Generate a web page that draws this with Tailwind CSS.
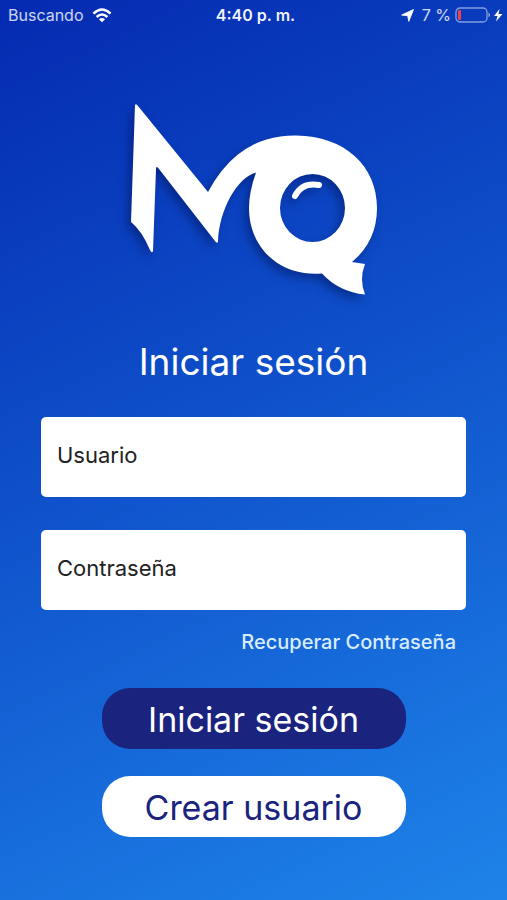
<!DOCTYPE html>
<html lang="es">
<head>
<meta charset="utf-8">
<meta name="viewport" content="width=device-width, initial-scale=1">
<title>Iniciar sesión</title>
<script src="https://cdn.jsdelivr.net/npm/@tailwindcss/browser@4"></script>
</head>
<body class="min-h-screen bg-linear-[155deg] from-[#042ab1] via-[#0f50ca] via-45% to-[#1e84e9] font-['Inter',sans-serif] text-white">
  <header class="grid h-[30px] grid-cols-[1fr_auto_1fr] items-center pr-1 pl-2 text-base text-white/80">
    <div class="flex items-center gap-2">
      <span>Buscando</span>
      <svg class="h-[15px] w-5" viewBox="0 0 20 15" fill="none" stroke="white" stroke-width="2.6" aria-hidden="true">
        <path d="M1.4 5.6Q10-2.6 18.6 5.6"/><path d="M4.6 9Q10 4 15.4 9"/><path d="M10 14.2 6.9 11.2Q10 8.6 13.1 11.2Z" fill="white" stroke="none"/>
      </svg>
    </div>
    <span class="font-semibold text-white/95">4:40 p. m.</span>
    <div class="flex items-center justify-end gap-1 whitespace-nowrap">
      <svg class="mr-1 h-[13px] w-[13px]" viewBox="0 0 12 12" fill="white" stroke="white" stroke-width=".8" stroke-linejoin="round" aria-hidden="true"><path d="M11.500 .5 7.200 11.400 6.200 6.200 .6 5.600Z"/></svg>
      <span>7 %</span>
      <svg class="h-4 w-12" viewBox="0 0 48 16" fill="none" aria-hidden="true">
        <rect x="1" y="1" width="31" height="14" rx="4" stroke="white" stroke-opacity=".5" stroke-width="1.3"/>
        <rect x="3" y="3" width="3" height="10" rx="1" fill="#f0434d"/>
        <path d="M33.500 5.500q3 2.500 0 5Z" fill="white" fill-opacity=".6"/>
        <path d="M44.500 2 39 9h3.500l-1.500 5.500 6.500-7.500h-4Z" fill="white"/>
      </svg>
    </div>
  </header>
  <main class="flex flex-col items-center px-[41px] pb-16">
    <svg class="mt-16 h-[220px] w-[264px] drop-shadow-[-4px_5px_5px_rgb(0_20_90/0.5)]" viewBox="122 94 264 220" role="img" aria-label="MQ">
      <path fill="white" fill-rule="evenodd" d="M135 105Q136 103 138 106L208 192Q238 135 296 135.500C345 136 377 166 377 208Q377 241 352 262L365 264Q359 279 365 294.500Q339 292 322 273.500C279 277 249 247 249 208Q249 192 256 172.500C238 177 219 209 218 242Q217 244 215 241L159 169Q156 165 156 169L153 251Q152 254 150 250Q142 231 131 222ZM280 208a32.500 34 0 1 0 65 0a32.500 34 0 1 0-65 0Z"/>
      <path d="M295 196Q302 182 319 185" fill="none" stroke="white" stroke-width="6" stroke-linecap="round"/>
    </svg>
    <h1 class="mt-6 text-[37px] leading-[48px]">Iniciar sesión</h1>
    <form class="mt-[31px] flex w-full flex-col items-center">
      <div class="flex h-20 w-full items-center gap-4 rounded-[5px] bg-white px-4 pb-1 text-[22px] text-[#222]">
        <label for="user">Usuario</label>
        <input id="user" type="text" class="h-full min-w-0 flex-1 outline-none">
      </div>
      <div class="mt-[33px] flex h-20 w-full items-center gap-4 rounded-[5px] bg-white px-4 pb-1 text-[22px] text-[#222]">
        <label for="pass">Contraseña</label>
        <input id="pass" type="password" class="h-full min-w-0 flex-1 outline-none">
      </div>
      <a href="#" class="mt-4 mr-[10px] self-end text-[20px] leading-8 font-medium text-[#d9ecff]">Recuperar Contraseña</a>
      <button type="submit" class="mt-[30px] h-[61px] w-[304px] rounded-[28px] bg-[#1a237e] pt-[2px] text-[34px] text-white">Iniciar sesión</button>
      <button type="button" class="mt-[27px] h-[61px] w-[304px] rounded-[28px] bg-white pt-[2px] text-[34px] text-[#1a237e]">Crear usuario</button>
    </form>
  </main>
</body>
</html>
